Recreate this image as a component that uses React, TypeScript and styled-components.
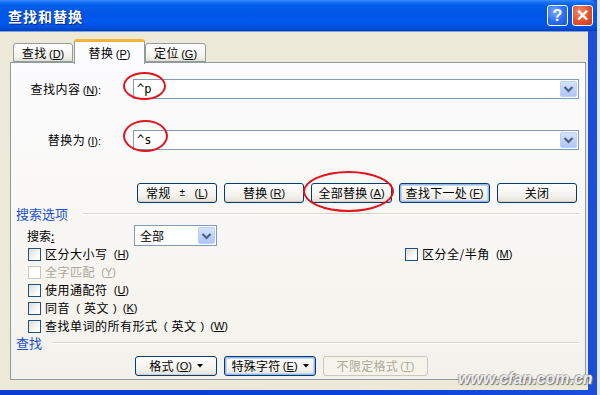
import React from "react";
import styled, { createGlobalStyle } from "styled-components";

const GlobalStyle = createGlobalStyle`
  html, body {
    margin: 0;
    padding: 0;
  }
  body {
    width: 600px;
    height: 395px;
    overflow: hidden;
    font-family: "Noto Sans CJK SC", "DejaVu Sans", sans-serif;
    font-size: 12px;
    color: #000;
  }
`;

const Window = styled.div`
  position: relative;
  width: 600px;
  height: 395px;
  box-sizing: border-box;
  display: flex;
  flex-direction: column;
  background: linear-gradient(90deg, #0a3fd0, #0842d8 60%, #1a4fdc);
  border-right: 3px solid #e1e6f2;
  overflow: hidden;
`;

const TitleBar = styled.div`
  flex: none;
  height: 31px;
  display: flex;
  align-items: center;
  padding: 0 4px 0 8px;
  background: linear-gradient(
    #3b8af6 0%,
    #1470f7 8%,
    #0461ee 16%,
    #0055e5 40%,
    #0058ec 70%,
    #0050dc 90%,
    #003fb2 100%
  );
  border-top-right-radius: 7px;
`;

const Title = styled.div`
  flex: 1;
  color: #fff;
  font-size: 14px;
  font-weight: bold;
  line-height: 20px;
  letter-spacing: 1px;
  text-shadow: 1px 1px 0 #0a2a8a;
`;

const CaptionButton = styled.div<{ $kind: "help" | "close" }>`
  width: 21px;
  height: 21px;
  margin-left: 4px;
  box-sizing: border-box;
  border: 1px solid #fff;
  border-radius: 3px;
  display: flex;
  align-items: center;
  justify-content: center;
  color: #fff;
  font-family: "Liberation Sans", sans-serif;
  font-size: 16px;
  font-weight: bold;
  background: ${({ $kind }) =>
    $kind === "close"
      ? "radial-gradient(circle at 35% 30%, #f28a6a, #e2532c 55%, #c6391a)"
      : "radial-gradient(circle at 35% 30%, #7fa8f8, #2a6cf2 55%, #1f55d8)"};
`;

const Body = styled.div`
  flex: 1;
  margin: 0 9px 5px 0;
  padding: 7px 2px 10px 10px;
  background: #ece9d8;
  display: flex;
  flex-direction: column;
  border-top: 1px solid #7ba2e7;
`;

const TabStrip = styled.div`
  flex: none;
  height: 23px;
  display: flex;
  align-items: flex-end;
  padding-left: 3px;
  position: relative;
  z-index: 1;
`;

const Tab = styled.div<{ $active?: boolean; $w: number }>`
  box-sizing: border-box;
  height: ${({ $active }) => ($active ? "25px" : "19px")};
  margin-bottom: ${({ $active }) => ($active ? "-2px" : "0")};
  width: ${({ $w }) => $w}px;
  padding-top: ${({ $active }) => ($active ? "3px" : "1px")};
  text-align: center;
  line-height: 16px;
  border: 1px solid #919b9c;
  border-bottom: ${({ $active }) => ($active ? "none" : "1px solid #919b9c")};
  border-radius: 3px 3px 0 0;
  background: ${({ $active }) =>
    $active ? "#fcfcfe" : "linear-gradient(#fefefe, #f4f3ee 70%, #e3e1d8)"};
  border-top: ${({ $active }) => ($active ? "3px solid #f8b33b" : "1px solid #919b9c")};
  margin-right: ${({ $active }) => ($active ? "0" : "1px")};
  letter-spacing: 0.5px;
`;

const Panel = styled.div`
  flex: 1;
  border: 1px solid #919b9c;
  background: linear-gradient(#fcfcfe, #f6f5f0 70%, #f2f1ec);
  display: flex;
  flex-direction: column;
  padding: 16px 6px 3px 0;
`;

const FieldRow = styled.div<{ $top?: number }>`
  display: grid;
  grid-template-columns: 90px 1fr;
  column-gap: 32px;
  align-items: center;
  height: 20px;
  margin-top: ${({ $top }) => $top || 0}px;
`;

const FieldLabel = styled.div`
  text-align: right;
  line-height: 16px;
  letter-spacing: 0.5px;
`;

const Combo = styled.div<{ $h?: number }>`
  box-sizing: border-box;
  height: ${({ $h }) => $h || 20}px;
  border: 1px solid #7f9db9;
  background: #fff;
  display: flex;
  align-items: center;
  padding: 1px;
`;

const ComboText = styled.div`
  flex: 1;
  padding-left: 2px;
  font-family: "DejaVu Sans Mono", "Noto Sans CJK SC", monospace;
  font-size: 12px;
  line-height: 16px;
`;

const ComboPlain = styled.div`
  flex: 1;
  padding-left: 4px;
  font-size: 12px;
  line-height: 16px;
`;

const DropButton = styled.div`
  width: 17px;
  align-self: stretch;
  box-sizing: border-box;
  border: 1px solid #bccff8;
  border-radius: 2px;
  background: linear-gradient(#d6e3fd, #bcd0fa 60%, #afc6f6);
  display: flex;
  align-items: center;
  justify-content: center;
`;

const ButtonRow = styled.div<{ $top: number; $left?: number }>`
  display: flex;
  gap: 7px;
  justify-content: ${({ $left }) => ($left !== undefined ? "flex-start" : "flex-end")};
  padding-left: ${({ $left }) => $left || 0}px;
  padding-right: ${({ $left }) => ($left !== undefined ? 0 : 2)}px;
  margin-top: ${({ $top }) => $top}px;
  height: 20px;
`;

const Button = styled.div<{ $w: number; $focus?: boolean; $disabled?: boolean }>`
  box-sizing: border-box;
  width: ${({ $w }) => $w}px;
  height: 20px;
  border: 1px solid ${({ $disabled }) => ($disabled ? "#cac8bb" : "#003c74")};
  border-radius: 3px;
  background: ${({ $disabled }) =>
    $disabled ? "#f5f4ea" : "linear-gradient(#ffffff, #f4f3ee 60%, #e3e2da)"};
  box-shadow: ${({ $focus, $disabled }) =>
    $disabled
      ? "none"
      : $focus
      ? "inset 0 0 0 1px #98b8ea, inset 0 0 0 2px #c3d6f5"
      : "inset 0 -1px 0 #d6d0c5"};
  color: ${({ $disabled }) => ($disabled ? "#aca899" : "#000")};
  display: flex;
  align-items: center;
  justify-content: center;
  line-height: 16px;
  white-space: nowrap;
  letter-spacing: 0.3px;
`;

const Plus = styled.span`
  font-family: "Liberation Sans", sans-serif;
  font-size: 10px;
  margin: 0 7px 0 9px;
`;

const Lat = styled.span`
  font-family: "Liberation Sans", "DejaVu Sans", sans-serif;
  font-size: 11px;
  letter-spacing: 0;
`;

const MenuArrow = styled.svg`
  margin-left: 5px;
`;

const SectionHead = styled.div<{ $gap: number; $top?: number }>`
  display: flex;
  align-items: center;
  height: 16px;
  margin-top: ${({ $top }) => $top || 0}px;
  padding-left: 5px;
  color: #1b4fd8;
  font-size: 13px;
  line-height: 16px;

  &::after {
    content: "";
    flex: 1;
    margin-left: ${({ $gap }) => $gap}px;
    height: 0;
    border-top: 1px solid #d8d6c9;
    border-bottom: 1px solid #ffffff;
  }
`;

const SearchRow = styled.div`
  display: grid;
  grid-template-columns: 107px 83px;
  align-items: center;
  padding-left: 16px;
  margin-top: 3px;
  height: 21px;
`;

const Options = styled.div`
  display: grid;
  grid-template-columns: 377px 1fr;
  grid-auto-rows: 18px;
  padding-left: 17px;
  margin-top: -1px;
`;

const Option = styled.div<{ $disabled?: boolean; $col?: number }>`
  grid-column: ${({ $col }) => $col || 1};
  display: flex;
  align-items: center;
  gap: 4px;
  color: ${({ $disabled }) => ($disabled ? "#aca899" : "#000")};
  line-height: 16px;
  letter-spacing: 0.5px;
  white-space: nowrap;
`;

const Box = styled.div<{ $disabled?: boolean }>`
  box-sizing: border-box;
  width: 13px;
  height: 13px;
  flex: none;
  border: 1px solid ${({ $disabled }) => ($disabled ? "#cac8bb" : "#1c5180")};
  background: ${({ $disabled }) =>
    $disabled ? "#ffffff" : "linear-gradient(135deg, #dcdcd7, #ffffff 80%)"};
`;

const Key = styled.u`
  text-decoration-thickness: 1px;
  text-underline-offset: 1px;
`;

const Ring = styled.div<{ $x: number; $y: number; $w: number; $h: number }>`
  position: absolute;
  left: ${({ $x }) => $x}px;
  top: ${({ $y }) => $y}px;
  width: ${({ $w }) => $w}px;
  height: ${({ $h }) => $h}px;
  box-sizing: border-box;
  border: 2.5px solid #e3121b;
  border-radius: 50%;
  pointer-events: none;
`;

const Watermark = styled.div`
  position: absolute;
  left: 458px;
  top: 370px;
  font-family: "Liberation Sans", sans-serif;
  font-size: 16px;
  font-weight: bold;
  font-style: italic;
  white-space: nowrap;
  color: rgba(255, 255, 255, 0.85);
  text-shadow: 0 0 1px #8a8a8a, 1px 1px 1px #777, -1px -1px 0 rgba(150, 150, 150, 0.6);
  pointer-events: none;
`;

const Chevron = () => (
  <svg width="11" height="8" viewBox="0 0 11 8">
    <polyline
      points="1.5,2 5.5,6 9.5,2"
      fill="none"
      stroke="#4d6185"
      strokeWidth="2.2"
    />
  </svg>
);

const Arrow = () => (
  <MenuArrow width="6" height="4" viewBox="0 0 6 4">
    <polygon points="0,0 6,0 3,3.5" fill="#000" />
  </MenuArrow>
);

const M = ({ k }: { k: string }) => (
  <Lat>
    &thinsp;(<Key>{k}</Key>)
  </Lat>
);

const P = ({ children }: { children: React.ReactNode }) => (
  <>
    <Lat>&thinsp;(</Lat>
    {children}
    <Lat>)</Lat>
  </>
);

export default function App() {
  return (
    <>
      <GlobalStyle />
      <Window>
        <TitleBar>
          <Title>查找和替换</Title>
          <CaptionButton $kind="help">?</CaptionButton>
          <CaptionButton $kind="close">✕</CaptionButton>
        </TitleBar>
        <Body>
          <TabStrip>
            <Tab $w={60}>
              查找<M k="D" />
            </Tab>
            <Tab $active $w={71}>
              替换<M k="P" />
            </Tab>
            <Tab $w={61}>
              定位<M k="G" />
            </Tab>
          </TabStrip>
          <Panel>
            <FieldRow>
              <FieldLabel>
                查找内容<M k="N" />
                <Lat>:</Lat>
              </FieldLabel>
              <Combo>
                <ComboText>^p</ComboText>
                <DropButton>
                  <Chevron />
                </DropButton>
              </Combo>
            </FieldRow>
            <FieldRow $top={31}>
              <FieldLabel>
                替换为<M k="I" />
                <Lat>:</Lat>
              </FieldLabel>
              <Combo>
                <ComboText>^s</ComboText>
                <DropButton>
                  <Chevron />
                </DropButton>
              </Combo>
            </FieldRow>
            <ButtonRow $top={33}>
              <Button $w={80}>
                常规<Plus>±</Plus>
                <M k="L" />
              </Button>
              <Button $w={80}>
                替换<M k="R" />
              </Button>
              <Button $w={81}>
                全部替换<M k="A" />
              </Button>
              <Button $w={91} $focus>
                查找下一处<M k="F" />
              </Button>
              <Button $w={80}>关闭</Button>
            </ButtonRow>
            <SectionHead $gap={15} $top={3}>
              搜索选项
            </SectionHead>
            <SearchRow>
              <div>
                搜索<Key>:</Key>
              </div>
              <Combo $h={21}>
                <ComboPlain>全部</ComboPlain>
                <DropButton>
                  <Chevron />
                </DropButton>
              </Combo>
            </SearchRow>
            <Options>
              <Option>
                <Box />
                区分大小写<M k="H" />
              </Option>
              <Option $col={2}>
                <Box />
                区分全/半角<M k="M" />
              </Option>
              <Option $disabled>
                <Box $disabled />
                全字匹配<M k="Y" />
              </Option>
              <Option>
                <Box />
                使用通配符<M k="U" />
              </Option>
              <Option>
                <Box />
                同音<P>英文</P>
                <M k="K" />
              </Option>
              <Option>
                <Box />
                查找单词的所有形式<P>英文</P>
                <M k="W" />
              </Option>
            </Options>
            <SectionHead $gap={10}>查找</SectionHead>
            <ButtonRow $top={5} $left={124}>
              <Button $w={82}>
                格式<M k="O" />
                <Arrow />
              </Button>
              <Button $w={92} $focus>
                特殊字符<M k="E" />
                <Arrow />
              </Button>
              <Button $w={105} $disabled>
                不限定格式<M k="T" />
              </Button>
            </ButtonRow>
          </Panel>
        </Body>
        <Ring $x={123} $y={72} $w={43} $h={28} />
        <Ring $x={123} $y={120} $w={45} $h={32} />
        <Ring $x={303} $y={171} $w={91} $h={41} />
        <Watermark>www.cfan.com.cn</Watermark>
      </Window>
    </>
  );
}
